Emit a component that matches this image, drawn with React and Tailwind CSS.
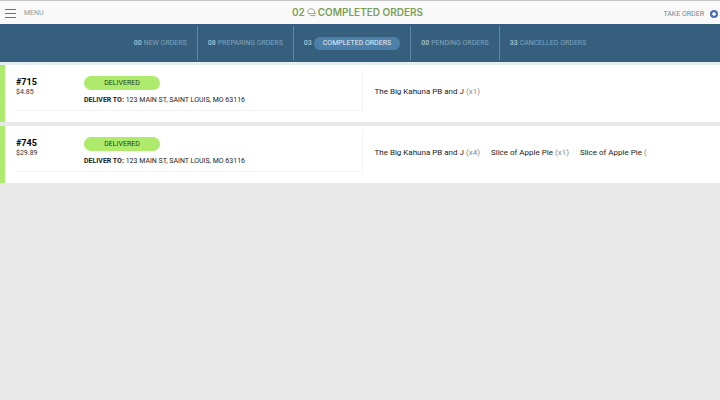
const TABS = [
  { id: 'new',       count: '00', label: 'NEW ORDERS'       },
  { id: 'preparing', count: '08', label: 'PREPARING ORDERS' },
  { id: 'completed', count: '03', label: 'COMPLETED ORDERS' },
  { id: 'pending',   count: '00', label: 'PENDING ORDERS'   },
  { id: 'cancelled', count: '33', label: 'CANCELLED ORDERS' },
]

const ORDERS = [
  {
    id: '#715',
    total: '$4.85',
    address: '123 MAIN ST, SAINT LOUIS, MO 63116',
    items: [{ name: 'The Big Kahuna PB and J', qty: '(x1)' }],
  },
  {
    id: '#745',
    total: '$29.89',
    address: '123 MAIN ST, SAINT LOUIS, MO 63116',
    items: [
      { name: 'The Big Kahuna PB and J', qty: '(x4)' },
      { name: 'Slice of Apple Pie', qty: '(x1)' },
      { name: 'Slice of Apple Pie', qty: '(' },
    ],
  },
]

function OrdersIcon() {
  return (
    <svg viewBox="0 0 9 9" className="size-[9px]" fill="none" stroke="#8f9d80"
         strokeWidth="0.9" strokeLinecap="round" aria-hidden="true">
      <path d="M2 6C0 5 0 1.2 3.6 .8C6.6 .5 8 2.4 7.6 5.4" />
      <path d="M1.6 5.6H8.4M3.6 7.6H8" />
    </svg>
  )
}

function PlusIcon() {
  return (
    <svg viewBox="0 0 8 8" className="size-2" aria-hidden="true">
      <circle cx="4" cy="4" r="4" fill="#4a6fb8" />
      <path d="M4 2V6M2 4H6" stroke="#fff" strokeWidth="1.4" />
    </svg>
  )
}

function Header() {
  return (
    <header className="grid grid-cols-[1fr_auto_1fr] items-center h-6 pl-[5px] pr-0.5
                       border-t border-[#c4c4c4] bg-[#f9f9f9]">
      <button className="flex items-center gap-2 justify-self-start pt-px
                         text-[7px] text-[#8d9aa0]">
        <svg viewBox="0 0 11 9" className="w-[11px] h-[9px]" stroke="#5c7880" aria-hidden="true">
          <path d="M0 .5H11M0 4.5H11M0 8.5H11" />
        </svg>
        MENU
      </button>
      <h1 className="flex items-center gap-0.5 pr-2 font-['Inter',sans-serif]
                     text-[10px] font-semibold text-[#7d9f55]">
        02 <OrdersIcon /> COMPLETED ORDERS
      </h1>
      <button className="flex items-center gap-1.5 justify-self-end pt-[3px]
                         text-[7px] text-[#6f8791]">
        TAKE ORDER
        <PlusIcon />
      </button>
    </header>
  )
}

function Tabs({ current }) {
  return (
    <nav className="flex justify-center py-0.5 h-[38px] bg-[#365f7d] text-[7px]
                    divide-x divide-[#5f8aa6]">
      {TABS.map(({ id, count, label }) => (
        <button key={id} className="flex items-center gap-0.5 px-2.5 text-[#7fa5bf]">
          <span className="font-medium text-[#a4c4d8]">{count}</span>
          {id === current
            ? <span className="px-[9px] rounded-md bg-[#4d80a8] leading-[13px] text-[#e0eef8]">{label}</span>
            : label}
        </button>
      ))}
    </nav>
  )
}

function Order({ order }) {
  return (
    <article className="grid grid-cols-[1fr_1fr] h-[57px] bg-white
                        border-l-5 border-[#aeea6c]">
      <div className="flex ml-[11px] mt-1 mb-[11px] border-b border-r border-[#f3f3f3]">
        <div className="w-[68px] pt-2">
          <h2 className="text-[9px] leading-[10px] font-bold text-black">{order.id}</h2>
          <p className="text-[7px] leading-[10px] text-[#333]">{order.total}</p>
        </div>
        <div className="pt-[7px]">
          <span className="block w-[76px] rounded-full bg-[#aeea6c] text-center
                           text-[7px] leading-[14px] text-[#24401a]">
            DELIVERED
          </span>
          <p className="mt-[5px] text-[7px] leading-[10px] text-[#222]">
            <strong>DELIVER TO:</strong> {order.address}
          </p>
        </div>
      </div>
      <ul className="flex gap-[11px] pl-3 pt-[21px] text-[8px] leading-3 text-[#222]">
        {order.items.map((item, i) => (
          <li key={i} className="whitespace-nowrap">
            {item.name} <span className="text-[#888]">{item.qty}</span>
          </li>
        ))}
      </ul>
    </article>
  )
}

export default function App() {
  return (
    <div className="min-h-screen bg-[#e9e9e9] font-['Roboto',sans-serif]">
      <Header />
      <Tabs current="completed" />
      <main className="flex flex-col gap-1 border-t-3 border-[#e6eff4]">
        {ORDERS.map((order) => <Order key={order.id} order={order} />)}
      </main>
    </div>
  )
}
